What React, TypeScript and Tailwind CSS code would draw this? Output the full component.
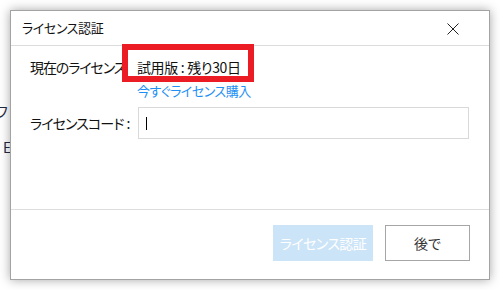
import React from "react";

const jp = "font-['Meiryo_UI','Noto_Sans_CJK_JP',sans-serif] [font-feature-settings:'palt']";

export default function App() {
  return (
    <div className={`relative w-[500px] h-[290px] bg-white overflow-hidden p-[10px] ${jp}`}>
      {/* desktop remnants behind dialog */}
      <div className="absolute left-[-4px] top-[104px] text-[14px] leading-none text-[#1f2a44]">フ</div>
      <div className="absolute left-[3px] top-[140px] text-[14px] leading-none text-[#1f2a44]">E</div>

      <div className="relative flex flex-col w-[480px] h-[270px] bg-white border border-[#a3a3a3] shadow-[0_0_10px_rgba(0,0,0,0.35)]">
        {/* title bar */}
        <div className="flex items-center justify-between h-[35px] border-b border-[#dcdcdc] pl-[11px] pr-[30px]">
          <span className="text-[13px] text-[#111] tracking-[-0.4px]">ライセンス認証</span>
          <svg width="12" height="12" viewBox="0 0 12 12" className="mt-[1px]">
            <path d="M0.5 0.5 L11.5 11.5 M11.5 0.5 L0.5 11.5" stroke="#222" strokeWidth="1" />
          </svg>
        </div>

        {/* body */}
        <div className="flex-1 flex flex-col pl-[19px] pr-[19px]">
          <div className="flex items-center mt-[12px] h-[18px]">
            <span className="w-[107px] text-[14px] text-[#111] tracking-[-1.1px]">現在のライセンス</span>
            <span className="text-[14px] text-[#111] tracking-[-0.4px]">
              試用版<span className="mx-[3px]">:</span>残り30日
            </span>
          </div>
          <div className="pl-[107px] mt-[7px] h-[16px] flex items-center">
            <span className="text-[13px] text-[#1e8ff5] tracking-[-0.5px]">今すぐライセンス購入</span>
          </div>
          <div className="flex items-center mt-[8px]">
            <span className="w-[108px] text-[14px] text-[#111] tracking-[-0.9px]">
              ライセンスコード<span className="ml-[3px]">:</span>
            </span>
            <div className="flex items-center w-[331px] h-[32px] border border-[#d9d9d9] pl-[7px]">
              <span className="w-px h-[13px] bg-black" />
            </div>
          </div>
        </div>

        {/* footer */}
        <div className="flex items-center justify-end gap-[12px] h-[70px] border-t border-[#dedede] pr-[19px] pb-[3px]">
          <button className="w-[100px] h-[36px] bg-[#cce4f7] text-white text-[14px] tracking-[-0.6px]">ライセンス認証</button>
          <button className="w-[85px] h-[36px] bg-white border border-[#a6a6a6] text-[#333] text-[14px]">後で</button>
        </div>

        {/* red highlight box */}
        <div className="absolute left-[111px] top-[33px] w-[132px] h-[38px] border-[6px] border-[#ec1c24]" />
      </div>
    </div>
  );
}
